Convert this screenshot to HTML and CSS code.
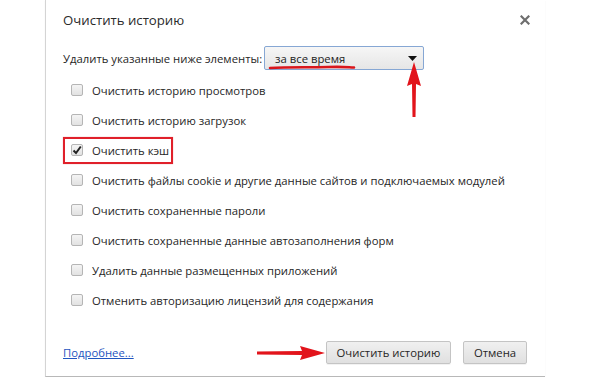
FILE: index.html
```html
<!DOCTYPE html>
<html lang="ru">
<head>
<meta charset="utf-8">
<title>Очистить историю</title>
<link rel="stylesheet" href="styles.css">
</head>
<body>
<div class="dialog">
  <div class="header">
    <h1 class="title">Очистить историю</h1>
    <svg class="close" width="10" height="10" viewBox="0 0 10 10"><path d="M1.5 1.5 L8.5 8.5 M8.5 1.5 L1.5 8.5" stroke="#6e6e6e" stroke-width="2.2" stroke-linecap="square"/></svg>
  </div>
  <div class="range-row">
    <span class="range-label">Удалить указанные ниже элементы:</span>
    <div class="select">
      <span class="select-text">за все время</span>
      <svg class="select-arrow" width="9" height="5" viewBox="0 0 9 5"><path d="M0 0 H9 L4.5 5 Z" fill="#111"/></svg>
      <svg class="underline" width="90" height="6" viewBox="0 0 90 6"><path d="M2 4 C20 3, 40 3.5, 60 3 S 80 3.5, 86 3.5" stroke="#d9161c" stroke-width="2.6" fill="none" stroke-linecap="round"/></svg>
      <svg class="arrow-up" width="16" height="56" viewBox="0 0 16 56"><path d="M8 0 L15 24 L10 22 L9.5 55 L6.5 55 L6 22 L1 24 Z" fill="#e2141b"/></svg>
    </div>
  </div>
  <ul class="items">
    <li class="item"><span class="box"></span>Очистить историю просмотров</li>
    <li class="item"><span class="box"></span>Очистить историю загрузок</li>
    <li class="item item-marked"><span class="box box-checked"><svg width="10" height="10" viewBox="0 0 10 10"><path d="M1.5 5.5 L4 8 L8.8 1.5" stroke="#222" stroke-width="2" fill="none"/></svg></span>Очистить кэш</li>
    <li class="item"><span class="box"></span>Очистить файлы cookie и другие данные сайтов и подключаемых модулей</li>
    <li class="item"><span class="box"></span>Очистить сохраненные пароли</li>
    <li class="item"><span class="box"></span>Очистить сохраненные данные автозаполнения форм</li>
    <li class="item"><span class="box"></span>Удалить данные размещенных приложений</li>
    <li class="item"><span class="box"></span>Отменить авторизацию лицензий для содержания</li>
  </ul>
  <div class="footer">
    <a class="more" href="#">Подробнее...</a>
    <div class="buttons">
      <button class="btn btn-primary">Очистить историю
        <svg class="arrow-right" width="70" height="16" viewBox="0 0 70 16"><path d="M69 8 L44 15 L46 10 L1 9.6 L1 6.4 L46 6 L44 1 Z" fill="#e2141b"/></svg>
      </button>
      <button class="btn btn-cancel">Отмена</button>
    </div>
  </div>
</div>
</body>
</html>
```
FILE: styles.css
```css
html, body {
  margin: 0;
  padding: 0;
  background: #ffffff;
}
body {
  font-family: "Open Sans", "Noto Sans", sans-serif;
  font-size: 11.3px;
  color: #262626;
}
.dialog {
  margin-left: 45px;
  width: 500px;
  height: 377px;
  border-left: 1px solid #d4d4d4;
  border-bottom: 1px solid #b8b8b8;
  box-shadow: 0 1px 1px rgba(0,0,0,0.08);
  box-sizing: border-box;
  padding: 0 17px 0 17px;
  display: flex;
  flex-direction: column;
}
.header {
  height: 40px;
  display: flex;
  align-items: center;
  justify-content: space-between;
}
.title {
  margin: 0;
  font-size: 13.2px;
  font-weight: normal;
  color: #2a2a2a;
}
.close {
  margin-right: -2px;
}
.range-row {
  margin-top: 6px;
  height: 24px;
  display: flex;
  align-items: center;
  gap: 2px;
}
.select {
  position: relative;
  width: 160px;
  height: 24px;
  box-sizing: border-box;
  border: 1px solid #86a7d4;
  border-radius: 2px;
  background: linear-gradient(#f6f6f6, #e6e6e6);
  display: flex;
  align-items: center;
  justify-content: space-between;
  padding: 0 6px 0 10px;
  color: #222;
}
.select-arrow {
  margin-top: 1px;
}
.underline {
  position: absolute;
  left: 3px;
  top: 17px;
}
.arrow-up {
  position: absolute;
  left: 141px;
  top: 15px;
}
.items {
  list-style: none;
  margin: 5px 0 0 0;
  padding: 0 0 0 8px;
}
.item {
  position: relative;
  height: 30px;
  display: flex;
  align-items: center;
  white-space: nowrap;
}
.box {
  width: 12px;
  height: 12px;
  box-sizing: border-box;
  border: 1px solid #b5b5b5;
  border-radius: 2px;
  background: linear-gradient(#f4f4f4, #e2e2e2);
  margin-right: 9px;
  display: flex;
  align-items: center;
  justify-content: center;
  flex: none;
}
.box-checked svg {
  display: block;
}
.item-marked::after {
  content: "";
  position: absolute;
  left: -8px;
  top: 2px;
  width: 110px;
  height: 27px;
  box-sizing: border-box;
  border: 2px solid #e0202a;
  box-shadow: 0 0 1px rgba(200,0,0,0.4);
}
.footer {
  margin-top: 26px;
  display: flex;
  align-items: center;
  justify-content: space-between;
  height: 23px;
}
.more {
  color: #1f55c0;
  text-decoration: underline;
}
.buttons {
  display: flex;
  gap: 12px;
  margin-right: 1px;
}
.btn {
  position: relative;
  font-family: inherit;
  font-size: 11.3px;
  color: #262626;
  height: 23px;
  box-sizing: border-box;
  border: 1px solid #c4c4c4;
  border-radius: 2px;
  background: linear-gradient(#f0f0f0, #e0e0e0);
  padding: 0;
  white-space: nowrap;
  box-shadow: 0 1px 0 rgba(0,0,0,0.05);
}
.btn-primary {
  width: 125px;
}
.btn-cancel {
  width: 64px;
}
.arrow-right {
  position: absolute;
  left: -71px;
  top: 3px;
}
```
